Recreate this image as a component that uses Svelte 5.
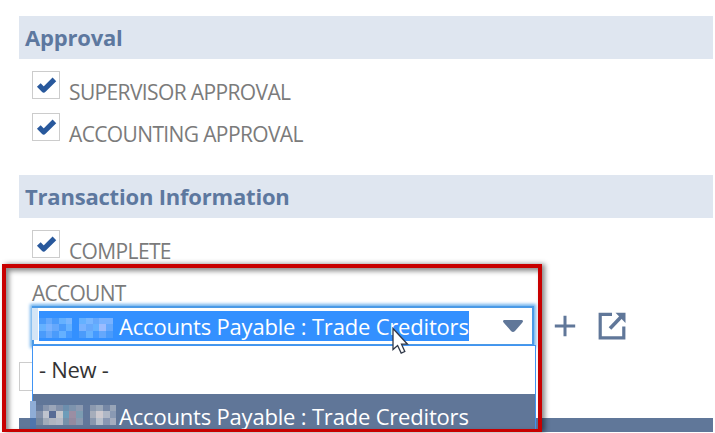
<script>
  const upper = [
    ['#4a9bfb', '#65a8fc', '#4a9bfb', '#65b1ff', '#78b6ff', '#3390ff', '#65b1ff', '#78b6ff', '#65a8fc', '#79b2ff', '#79b2ff'],
    ['#65b1ff', '#79b2ff', '#65a8fc', '#4a9bfb', '#65b1ff', '#3390ff', '#79b2ff', '#65a8fc', '#65b1ff', '#9bbcff', '#65a8fc'],
    ['#4a9bfb', '#65a8fc', '#4a9bfb', '#65b1ff', '#459aff', '#3390ff', '#4a9bfb', '#65b1ff', '#459aff', '#65a8fc', '#4a9bfb']
  ];
  const lower = [
    ['#667b9d', '#8795ad', '#9ba6b9', '#8291ab', '#6c8ead', '#7d93ad', '#8c9ab1', '#62779a', '#8b99af', '#9aa7b9', '#7587a5', '#98a5b8'],
    ['#8392ac', '#bec3ce', '#576b95', '#c3c5cb', '#6d9cb9', '#9b8ea3', '#7c9cb2', '#62779a', '#a6adbb', '#cdc9cf', '#afb7c6', '#8999b3'],
    ['#75879f', '#a1abba', '#afb5c1', '#b4bac7', '#7691aa', '#938aa0', '#8b9ab0', '#62779a', '#8997ae', '#b8c0cc', '#8997b2', '#a4adbf']
  ];
</script>

{#snippet check(label)}
  <div class="check">
    <span class="box"><svg width="28" height="28" viewBox="0 0 28 28"><path d="M6.8 14 11.7 19 22.4 8.4" fill="none" stroke="#28589c" stroke-width="5.2" stroke-linejoin="round" /></svg></span>
    <span class="label">{label}</span>
  </div>
{/snippet}

{#snippet mosaic(rows)}
  <span class="mosaic">
    {#each rows as row}
      <span class="cells">{#each row as color}<i style:background={color}></i>{/each}</span>
    {/each}
  </span>
{/snippet}

<main>
  <section>
    <h2>Approval</h2>
    {@render check('SUPERVISOR APPROVAL')}
    {@render check('ACCOUNTING APPROVAL')}
  </section>
  <section class="transaction">
    <h2>Transaction Information</h2>
    {@render check('COMPLETE')}
    <div class="field-label">ACCOUNT</div>
    <div class="field-row">
      <div class="combo">
        <div class="input">
          <span class="edge"></span>
          <span class="selected">{@render mosaic(upper)}<b class="value">Accounts Payable : Trade Creditors</b></span>
          <svg class="caret" width="22" height="14" viewBox="0 0 22 14"><path d="M2 1H20Q22 2 20 4L13 12Q11 14 9 12L2 4Q0 2 2 1Z" fill="#607799" /></svg>
        </div>
        <div class="menu">
          <div class="option">- New -</div>
          <div class="option active">{@render mosaic(lower)}<b class="value">Accounts Payable : Trade Creditors</b></div>
        </div>
      </div>
      <svg class="plus" width="22" height="22" viewBox="0 0 22 22"><path d="M11 .8V21.2M.8 11H21.2" stroke="#607799" stroke-width="3" /></svg>
      <svg class="open" width="28" height="28" viewBox="0 0 28 28"><path d="M14 2.3H2.2V25.8H25.8V14.5" fill="none" stroke="#607799" stroke-width="3.2" /><path d="M12 16.5 23 5" stroke="#607799" stroke-width="3.6" /><path d="M17.5 .8H27.5V11Z" fill="#607799" /></svg>
    </div>
  </section>
  <div class="behind"></div>
  <footer></footer>
  <span class="tab"></span>
  <div class="callout"></div>
  <svg class="cursor" width="18" height="28" viewBox="0 0 18 28"><path d="M1 1.5V22.5L5.6 18.5 9.2 26.1 12.8 24.5 9.5 17.2H15.5Z" fill="#fff" stroke="#303848" stroke-width="1.3" /></svg>
</main>

<style>
  :global(body) { margin: 0; background: #fff; }
  main { position: relative; box-sizing: border-box; width: 715px; height: 433px; padding: 16px 2px 0 19px; overflow: hidden; font-family: "Open Sans", sans-serif; background: #fff; }
  h2 { margin: 0 0 12px; height: 43px; padding-left: 6px; font-size: 22px; line-height: 42px; font-weight: 700; letter-spacing: -.2px; color: #5d789f; background: #dfe6f0; white-space: nowrap; }
  .check { display: flex; height: 41.6px; padding-left: 13px; }
  .box { box-sizing: border-box; width: 28px; height: 28px; border: 1px solid #ccc; }
  .box svg { display: block; margin: -1px; }
  .label { margin: 8px 0 0 9px; font-size: 21px; line-height: 27px; letter-spacing: -.63px; color: #7b7b7b; white-space: nowrap; }
  .transaction { margin-top: 21px; }
  .field-label { padding-left: 13px; height: 34px; font-size: 21px; line-height: 43px; letter-spacing: -.75px; color: #7b7b7b; }
  .field-row { display: flex; align-items: flex-start; padding-left: 13px; }
  .combo { position: relative; width: 502px; }
  .input { box-sizing: border-box; display: flex; align-items: center; height: 40px; border: 2px solid #4b9ae6; box-shadow: 0 0 3px 2px #72b4ee; }
  .edge { width: 6px; height: 32px; margin: -3px 0 0 -2px; background: #d4e5f6; }
  .selected { display: flex; align-items: center; width: 430px; height: 30px; margin: 1px 0 0 1px; background: #3390ff; }
  .value { font-size: 22px; line-height: 28px; font-weight: 400; letter-spacing: -.19px; white-space: nowrap; color: #fff; }
  .selected .value { margin: -1px 0 0 -1px; }
  .mosaic { display: flex; flex-direction: column; width: 81px; margin-top: 3px; flex-shrink: 0; }
  .cells { display: flex; }
  .cells i { width: 6.7px; height: 6.7px; }
  .caret { margin-left: 33px; }
  .menu { position: absolute; top: 39px; left: 0; z-index: 1; box-sizing: border-box; width: 504px; height: 86px; border: solid #4094f4; border-width: 1px 1px 0 1px; background: #fff; overflow: hidden; }
  .option { height: 48px; padding-left: 6px; font-size: 22px; line-height: 46px; letter-spacing: -.3px; color: #333; }
  .active { display: flex; align-items: flex-start; padding-left: 3px; background: #607698; }
  .active .mosaic { width: 83px; margin-top: 11px; }
  .active .value { margin-top: 8px; }
  .plus { margin: 9px 0 0 20px; }
  .open { margin: 6px 0 0 22px; }
  .behind { position: absolute; left: 19px; top: 362px; width: 12px; height: 27px; border: 1px solid #ccc; border-right: 0; }
  footer { position: absolute; left: 19px; top: 418px; width: 694px; height: 14px; background: #607799; }
  .tab { position: absolute; z-index: 1; left: 30px; top: 401px; width: 6px; height: 29px; background: linear-gradient(#8fadd6 17px, #4f75ac 17px); }
  .callout { position: absolute; z-index: 2; box-sizing: border-box; left: 2px; top: 264px; width: 540px; height: 168px; border: 4px solid #c80000; border-bottom-width: 3px; box-shadow: 3px 0 5px #0007, inset 3px 3px 5px #0007; }
  .cursor { position: absolute; z-index: 3; left: 392px; top: 327px; }
</style>
